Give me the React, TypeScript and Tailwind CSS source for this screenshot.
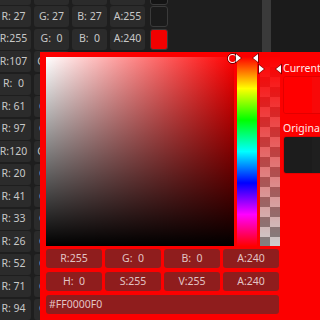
import React from 'react'

type Rgba = [number, number, number, number]

// background list of color rows, the picker popup sits over it
const listRows: Rgba[] = [
  [20, 20, 20, 255],
  [27, 27, 27, 255],
  [255, 0, 0, 240],
  [107, 107, 107, 255],
  [0, 0, 0, 255],
  [61, 61, 61, 255],
  [97, 97, 97, 255],
  [120, 120, 120, 255],
  [20, 20, 20, 255],
  [41, 41, 41, 255],
  [33, 33, 33, 255],
  [26, 26, 26, 255],
  [52, 52, 52, 255],
  [71, 71, 71, 255],
  [94, 94, 94, 255],
]

const fmt = (label: string, v: number) => `${label}:${String(v).padStart(3, ' ')}`

// rows under the popup only show their first two fields
const ListRow = ({ c, covered }: { c: Rgba; covered: boolean }) => (
  <div className="flex h-[21px] shrink-0 gap-[3px]">
    {['R', 'G', 'B', 'A'].slice(0, covered ? 2 : 4).map((l, i) => (
      <div
        key={l}
        className="flex w-[35px] shrink-0 items-center justify-center whitespace-pre rounded-[3px] bg-[#2b2b2b] text-[#c8c8c8]"
      >
        {fmt(l, c[i])}
      </div>
    ))}
    {!covered && (
      <div
        className="ml-[2px] w-[18px] shrink-0 rounded-[3px] border border-[#3a3a3a]"
        style={{ backgroundColor: `rgba(${c[0]},${c[1]},${c[2]},${c[3] / 255})` }}
      />
    )}
  </div>
)

const PopupField = ({ text }: { text: string }) => (
  <div className="flex h-[19px] w-[56px] shrink-0 items-center justify-center whitespace-pre rounded-[3px] bg-[#8f1d1d] pt-[1px] text-[#e2c4c4]">
    {text}
  </div>
)

const Markers = () => (
  <svg className="pointer-events-none absolute inset-0" width="320" height="320" viewBox="0 0 320 320">
    {/* sv cursor */}
    <circle cx="232.5" cy="58.5" r="5" fill="none" stroke="#000" strokeOpacity="0.6" strokeWidth="1" />
    <circle cx="232.5" cy="58.5" r="4" fill="none" stroke="#fff" strokeWidth="1.2" />
    {/* hue bar arrows */}
    <polygon points="235,52.5 242,58 235,63.5" fill="#000" fillOpacity="0.5" />
    <polygon points="236,54 241,58 236,62" fill="#fff" />
    <polygon points="259,52.5 252,58 259,63.5" fill="#000" fillOpacity="0.5" />
    <polygon points="258,54 253,58 258,62" fill="#fff" />
    {/* alpha bar arrows */}
    <polygon points="258,63.5 265,69 258,74.5" fill="#000" fillOpacity="0.5" />
    <polygon points="259,65 264,69 259,73" fill="#fff" />
    <polygon points="282,63.5 275,69 282,74.5" fill="#000" fillOpacity="0.5" />
    <polygon points="281,65 276,69 281,73" fill="#fff" />
  </svg>
)

const ColorPopup = () => (
  <div className="absolute bottom-0 left-[40px] right-0 top-[52px] overflow-hidden bg-[#fc0000] pl-[6px] pt-[5px]">
    <div className="flex gap-[3px]">
      <div className="relative h-[189px] w-[188px] shrink-0 bg-[linear-gradient(to_right,#ffffff,#ff0000)]">
        <div className="absolute inset-0 bg-[linear-gradient(to_bottom,rgba(0,0,0,0),#000000)]" />
      </div>
      <div className="h-[189px] w-[20px] shrink-0 bg-[linear-gradient(to_bottom,#ff0000,#ffff00,#00ff00,#00ffff,#0000ff,#ff00ff,#ff0000)]" />
      <div className="relative h-[189px] w-[20px] shrink-0 bg-[repeating-conic-gradient(#cccccc_0_25%,#808080_0_50%)] bg-[length:20px_20px]">
        <div className="absolute inset-0 bg-[linear-gradient(to_bottom,#ff0000,rgba(255,0,0,0))]" />
      </div>
      <div className="flex shrink-0 flex-col pt-[3px] text-[#ffe8e8]">
        <span className="leading-[16px]">Current</span>
        <div className="flex h-[38px] w-[57px] overflow-hidden rounded-[3px] border border-black/10">
          <div className="w-1/2 bg-[#ff0000]" />
          <div className="w-1/2 bg-[#f80808]" />
        </div>
        <span className="mt-[6px] leading-[16px]">Original</span>
        <div className="flex h-[38px] w-[57px] overflow-hidden rounded-[3px] border border-black/10">
          <div className="w-1/2 bg-[#1c1c1c]" />
          <div className="w-1/2 bg-[#1f1f1f]" />
        </div>
      </div>
    </div>

    <div className="mt-[3px] flex flex-col gap-[4px]">
      <div className="flex gap-[3px]">
        <PopupField text="R:255" />
        <PopupField text="G:  0" />
        <PopupField text="B:  0" />
        <PopupField text="A:240" />
      </div>
      <div className="flex gap-[3px]">
        <PopupField text="H:  0" />
        <PopupField text="S:255" />
        <PopupField text="V:255" />
        <PopupField text="A:240" />
      </div>
      <div className="flex h-[19px] w-[233px] items-center rounded-[3px] bg-[#8f1d1d] pl-[3px] text-[#e2c4c4]">
        #FF0000F0
      </div>
    </div>
  </div>
)

export default function App() {
  return (
    <div className="relative flex h-[320px] w-[320px] overflow-hidden bg-[#1e1e1e] font-['Noto_Sans',sans-serif] text-[10.5px]">
      <div className="w-[262px] shrink-0 overflow-hidden">
        <div className="-ml-[4px] -mt-[16.5px] flex flex-col gap-[1.5px]">
          {listRows.map((c, i) => (
            <ListRow key={i} c={c} covered={i >= 3} />
          ))}
        </div>
      </div>
      <div className="w-[9px] shrink-0 bg-[#3a3a3a]" />
      <div className="flex-1 bg-[#1b1b1b]" />

      <ColorPopup />
      <Markers />
    </div>
  )
}
